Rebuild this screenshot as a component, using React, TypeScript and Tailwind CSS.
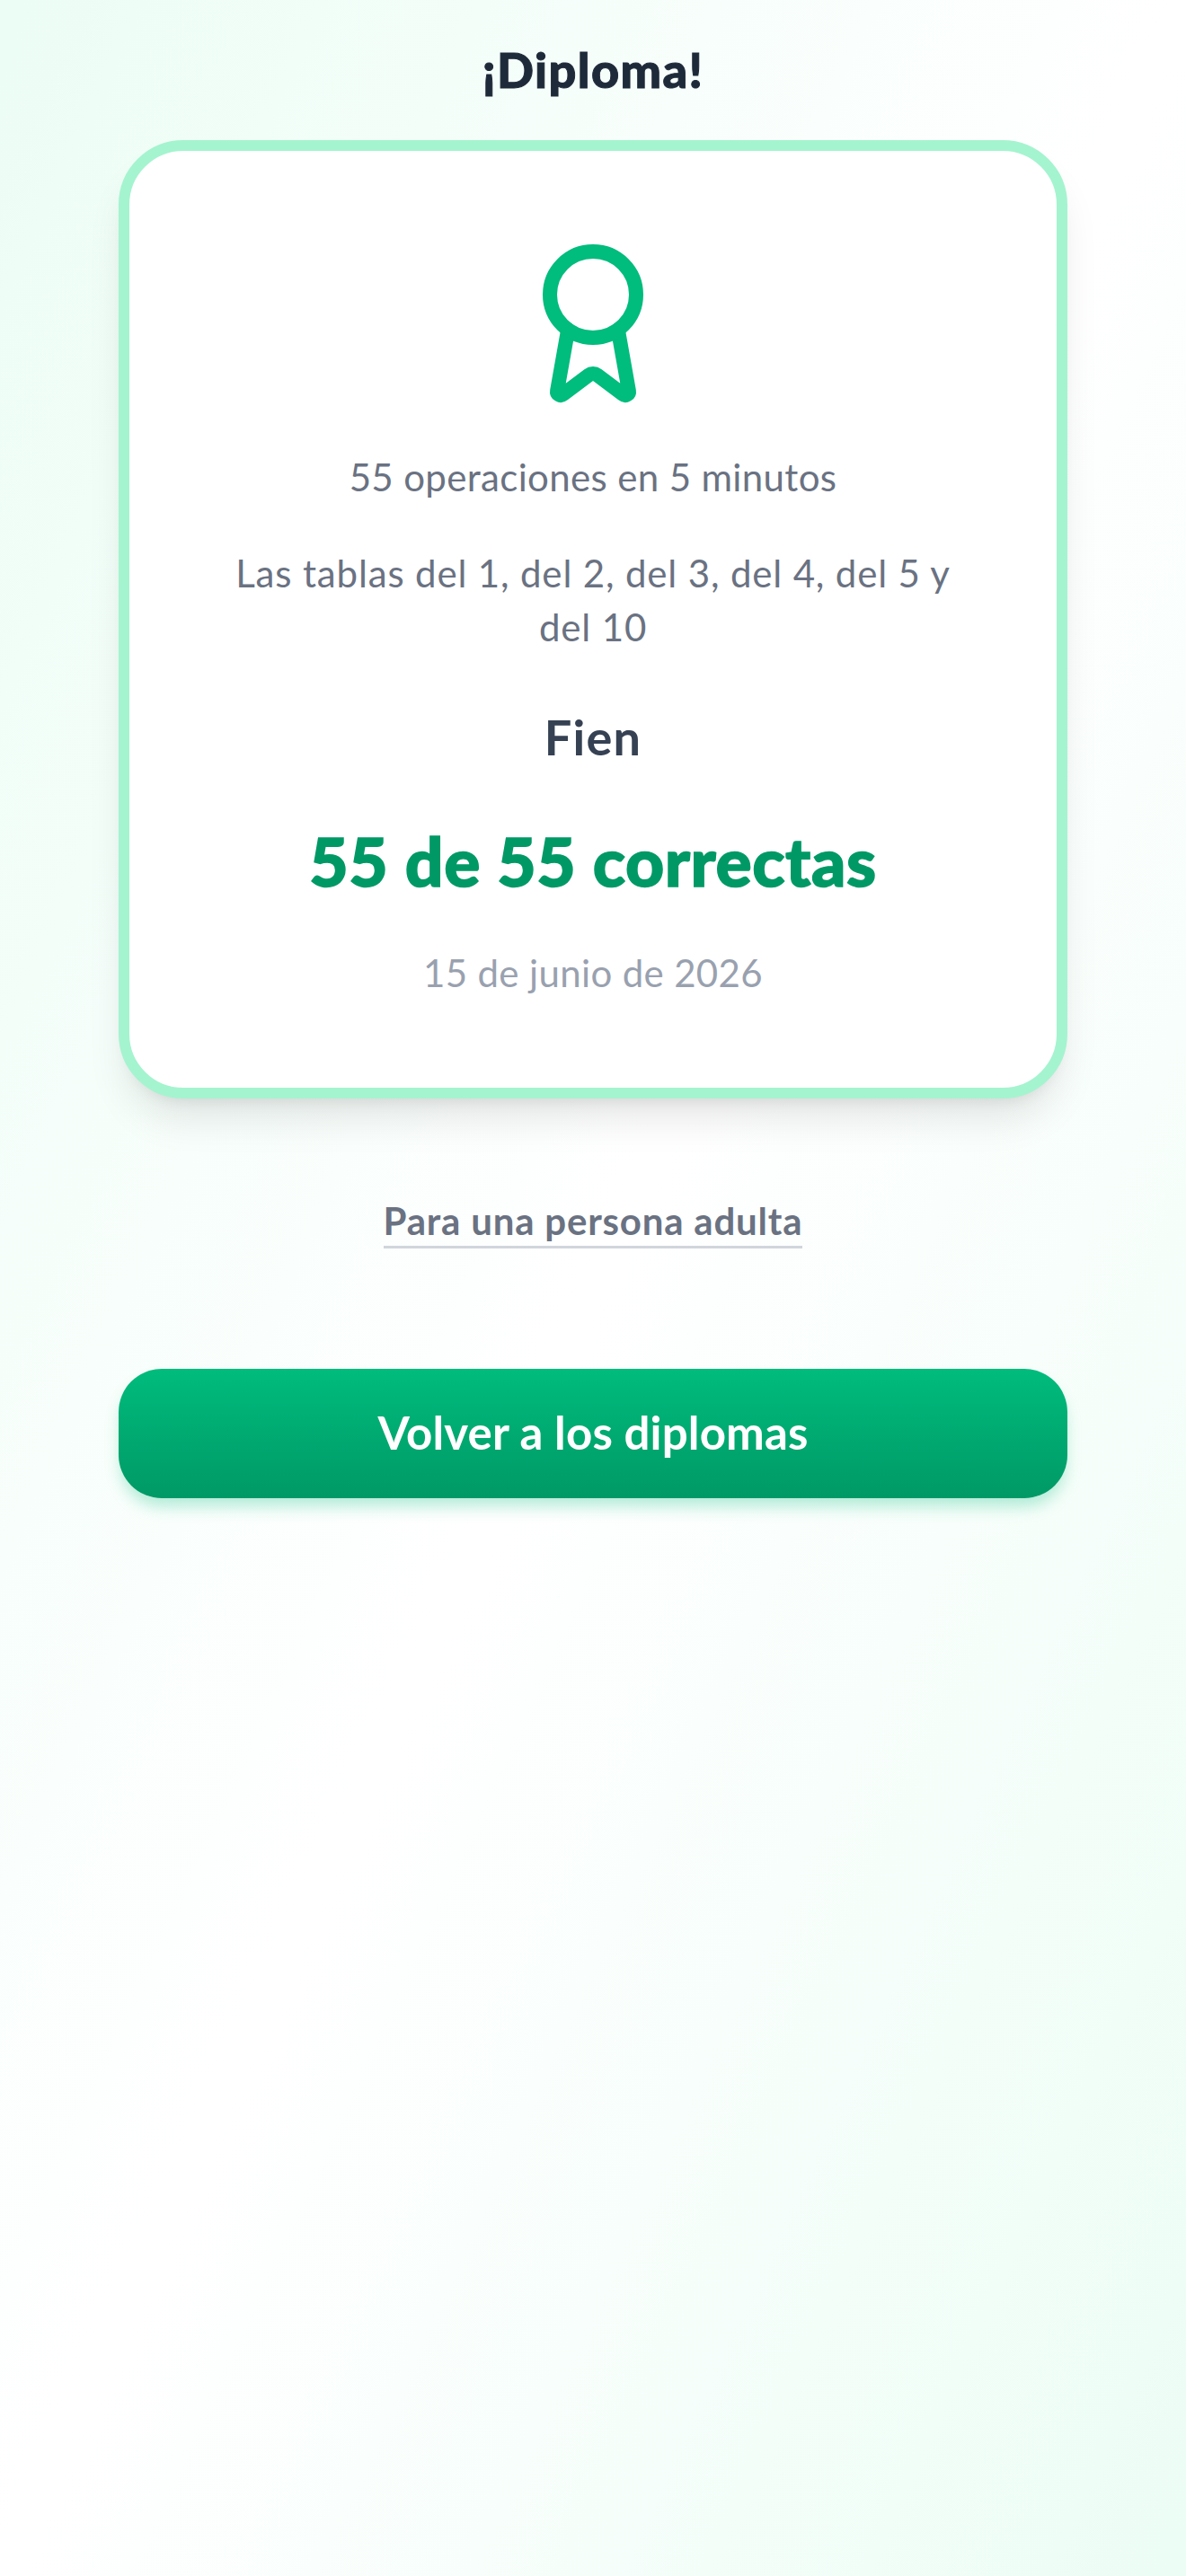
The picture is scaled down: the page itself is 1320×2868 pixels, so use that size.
import { Award } from "lucide-react";

export default function App() {
  return (
    <div className="min-h-[2868px] w-[1320px] bg-gradient-to-br from-emerald-50 via-white to-emerald-50 px-[132px] pt-[48px] text-center font-['Lato','Noto_Sans',sans-serif]">
      <h1 className="text-[54px] leading-[60px] font-black tracking-[1.4px] text-[#1e2939] [-webkit-text-stroke:1px_#1e2939]">¡Diploma!</h1>
      <div className="mt-[48px] flex flex-col items-center rounded-[72px] border-[12px] border-[#a4f4cf] bg-white px-[108px] pt-[96px] pb-[98px] shadow-[0_30px_45px_-9px_rgba(0,0,0,0.1),0_12px_18px_-12px_rgba(0,0,0,0.1)]">
        <Award size={192} strokeWidth={2} className="text-[#00bc7d]" />
        <p className="mt-[45px] text-[42px] leading-[60px] tracking-[0.35px] text-[#6a7282]">55 operaciones en 5 minutos</p>
        <p className="mt-[47px] text-[42px] leading-[60px] tracking-[0.85px] text-[#6a7282]">Las tablas del 1, del 2, del 3, del 4, del 5 y del 10</p>
        <p className="mt-[51px] text-[54px] leading-[84px] font-bold tracking-[1.3px] text-[#364153]">Fien</p>
        <p className="mt-[47px] text-[75px] leading-[96px] font-black tracking-[0.55px] text-[#009966] [-webkit-text-stroke:1.5px_#009966]">55 de 55 correctas</p>
        <p className="mt-[47px] text-[42px] leading-[60px] tracking-[0.35px] text-[#99a1af]">15 de junio de 2026</p>
      </div>
      <div className="mt-[108px] flex justify-center">
        <span className="border-b-[3px] border-[#d1d5dc] text-[42px] leading-[56px] font-bold tracking-[0.8px] text-[#6a7282]">Para una persona adulta</span>
      </div>
      <button className="mt-[134px] h-[144px] w-full rounded-[48px] bg-gradient-to-b from-[#00bc7d] to-[#009966] pb-[2px] text-[51px] font-bold tracking-[0.15px] text-white shadow-[0_12px_18px_-3px_rgba(0,188,125,0.3)]">Volver a los diplomas</button>
    </div>
  );
}
